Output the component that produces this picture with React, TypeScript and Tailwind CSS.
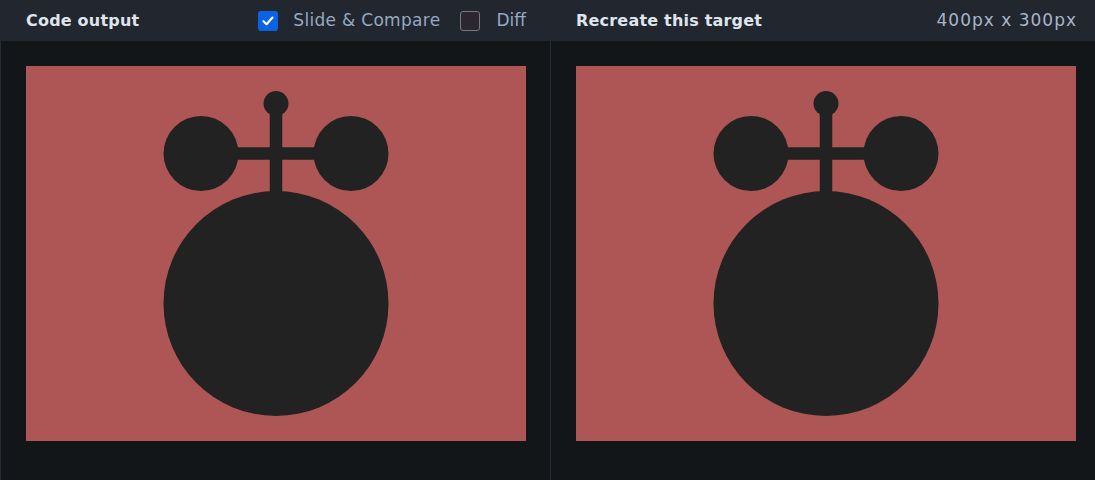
import React from "react";

function Shape() {
  return (
    <svg width={500} height={375} viewBox="0 0 400 300" className="block">
      <rect x={0} y={0} width={400} height={300} fill="#ae5656" />
      <rect x={195} y={30} width={10} height={80} fill="#222222" />
      <rect x={140} y={65} width={120} height={10} fill="#222222" />
      <circle cx={200} cy={30} r={10} fill="#222222" />
      <circle cx={140} cy={70} r={30} fill="#222222" />
      <circle cx={260} cy={70} r={30} fill="#222222" />
      <circle cx={200} cy={190} r={90} fill="#222222" />
    </svg>
  );
}

export default function App() {
  const font = { fontFamily: "'DejaVu Sans', Inter, sans-serif" };
  return (
    <div className="w-[1095px] h-[480px] bg-[#131619] flex flex-col overflow-hidden" style={font}>
      <div className="h-[41px] bg-[#22262e] flex shrink-0">
        <div className="w-[550px] pl-[26px] flex items-center">
          <div className="w-[500px] flex items-center justify-between">
            <span className="text-[16px] font-bold text-[#dfe4ec] tracking-[0.2px]">Code output</span>
            <div className="flex items-center">
              <span className="w-[20px] h-[20px] rounded-[3px] bg-[#0b63e4] flex items-center justify-center">
                <svg width="14" height="14" viewBox="0 0 14 14">
                  <path d="M2.5 7.2 L5.6 10.2 L11.5 3.6" stroke="white" strokeWidth="2.2" fill="none" strokeLinecap="round" strokeLinejoin="round" />
                </svg>
              </span>
              <span className="ml-[15px] text-[17px] text-[#95a9c2] tracking-[0.3px]">Slide &amp; Compare</span>
              <span className="ml-[20px] w-[20px] h-[20px] rounded-[3px] bg-[#2a2730] border border-[#77777f]" />
              <span className="ml-[16px] text-[17px] text-[#95a9c2]">Diff</span>
            </div>
          </div>
        </div>
        <div className="flex-1 pl-[26px] flex items-center">
          <div className="w-[500px] flex items-center justify-between">
            <span className="text-[16px] font-bold text-[#dfe4ec] tracking-[0.2px]">Recreate this target</span>
            <span className="text-[17px] text-[#a7b6c9] tracking-[1px] -mr-[1px]">400px x 300px</span>
          </div>
        </div>
      </div>
      <div className="flex flex-1">
        <div className="w-[550px] border-l border-[#262c35] pl-[25px] pt-[25px]">
          <Shape />
        </div>
        <div className="flex-1 border-l border-[#262c35] pl-[25px] pt-[25px]">
          <Shape />
        </div>
      </div>
    </div>
  );
}
